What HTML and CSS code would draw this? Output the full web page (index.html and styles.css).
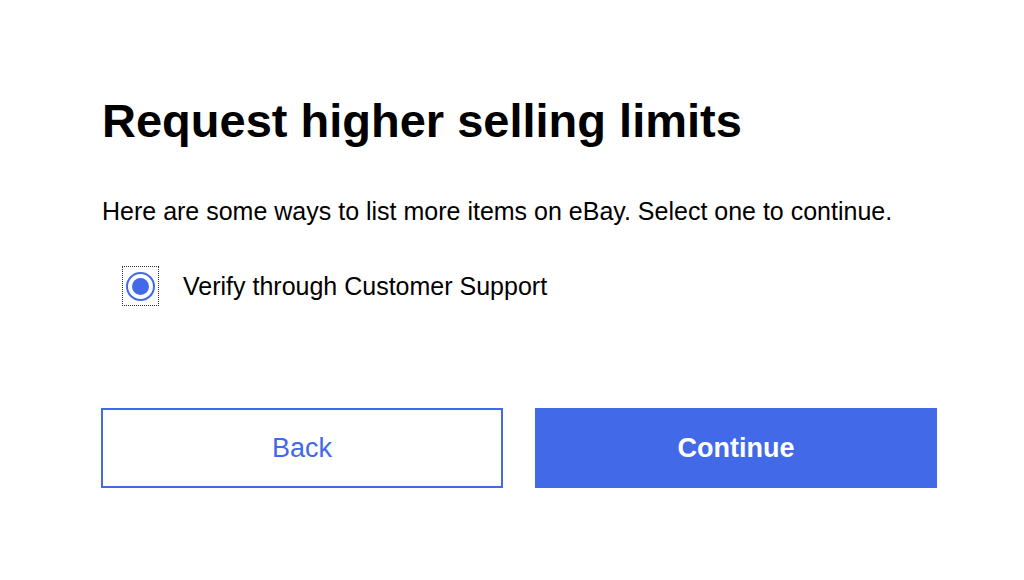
FILE: index.html
```html
<!DOCTYPE html>
<html lang="en">
<head>
<meta charset="utf-8">
<title>Request higher selling limits</title>
<link rel="stylesheet" href="styles.css">
</head>
<body>
<main class="page">
  <h1 class="title">Request higher selling limits</h1>
  <p class="intro">Here are some ways to list more items on eBay. Select one to continue.</p>
  <label class="option">
    <span class="radio-focus"><span class="radio"><span class="radio-dot"></span></span></span>
    <span class="option-label">Verify through Customer Support</span>
  </label>
  <div class="actions">
    <button class="btn btn-secondary" type="button">Back</button>
    <button class="btn btn-primary" type="button">Continue</button>
  </div>
</main>
</body>
</html>
```

FILE: styles.css
```css
html, body {
  margin: 0;
  padding: 0;
  background: #ffffff;
}

body {
  font-family: "Liberation Sans", Arial, sans-serif;
  color: #000000;
}

.page {
  padding: 94px 87px 0 101px;
}

.title {
  margin: 0 0 0 1px;
  font-size: 47px;
  line-height: 54px;
  font-weight: 700;
}

.intro {
  margin: 49px 0 0 1px;
  font-size: 25px;
  line-height: 29px;
}

.option {
  display: flex;
  align-items: center;
  margin: 40px 0 0 21px;
}

.radio-focus {
  width: 35px;
  height: 38px;
  border: 1px dotted #333;
  display: flex;
  align-items: center;
  justify-content: center;
}

.radio {
  width: 25px;
  height: 25px;
  border: 2.5px solid #4169e8;
  border-radius: 50%;
  display: flex;
  align-items: center;
  justify-content: center;
}

.radio-dot {
  width: 17px;
  height: 17px;
  border-radius: 50%;
  background: #4169e8;
}

.option-label {
  margin-left: 24px;
  font-size: 25px;
  line-height: 29px;
}

.actions {
  display: grid;
  grid-template-columns: 402px 402px;
  column-gap: 32px;
  margin-top: 102px;
}

.btn {
  height: 80px;
  font-family: "Liberation Sans", Arial, sans-serif;
  font-size: 27px;
  border-radius: 0;
  cursor: pointer;
}

.btn-secondary {
  background: #ffffff;
  border: 2px solid #4169e8;
  color: #4169e8;
}

.btn-primary {
  background: #4169e8;
  border: 2px solid #4169e8;
  color: #ffffff;
  font-weight: 700;
}
```
